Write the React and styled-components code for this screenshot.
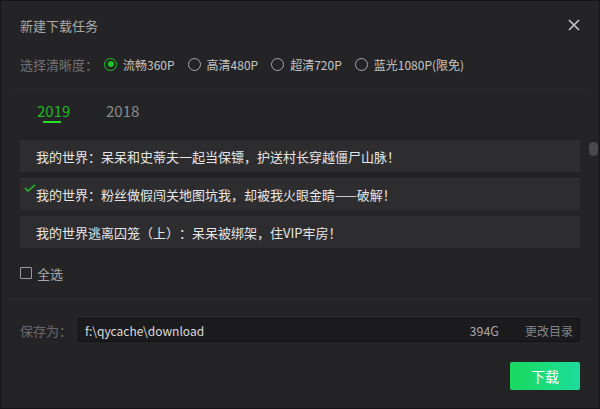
import React from 'react';
import styled, { createGlobalStyle } from 'styled-components';

const GlobalStyle = createGlobalStyle`
	html, body {
		margin: 0;
		padding: 0;
		background: #242426;
	}
	* {
		box-sizing: border-box;
	}
`;

const Dialog = styled.div`
	width: 600px;
	height: 409px;
	background: #242426;
	border: 1px solid #161618;
	font-family: "Noto Sans CJK SC", "Noto Sans", sans-serif;
	text-spacing-trim: space-all;
	display: flex;
	flex-direction: column;
`;

const Header = styled.div`
	height: 48px;
	display: flex;
	align-items: center;
	justify-content: space-between;
	padding: 0 18px 0 19px;
`;

const Title = styled.div`
	font-size: 13px;
	color: #a9a9a9;
`;

const CloseButton = styled.button`
	background: none;
	border: none;
	padding: 0;
	width: 14px;
	height: 14px;
	display: flex;
	align-items: center;
	justify-content: center;
	cursor: pointer;
`;

const QualityRow = styled.div`
	height: 30px;
	display: flex;
	align-items: center;
	padding-left: 19px;
`;

const QualityLabel = styled.span`
	font-size: 13px;
	color: #727274;
	margin-right: 6px;
`;

const RadioOption = styled.label`
	display: flex;
	align-items: center;
	gap: 6px;
	font-size: 12px;
	color: #c4c4c4;
	margin-right: 13px;
	cursor: pointer;
`;

const RadioCircle = styled.span`
	width: 13px;
	height: 13px;
	border-radius: 50%;
	border: 1.5px solid ${(p) => (p.$checked ? '#1fc41f' : '#a8a8a8')};
	display: flex;
	align-items: center;
	justify-content: center;

	&::after {
		content: '';
		display: ${(p) => (p.$checked ? 'block' : 'none')};
		width: 6px;
		height: 6px;
		border-radius: 50%;
		background: #1fc41f;
	}
`;

const Divider = styled.div`
	height: 1px;
	background: #2e2e30;
	margin: ${(p) => p.$top}px 11px 0;
`;

const Tabs = styled.div`
	display: flex;
	padding: 11px 0 0 36px;
`;

const Tab = styled.div`
	width: 69px;
	display: flex;
	flex-direction: column;
	align-items: flex-start;
	font-size: 15px;
	line-height: 20px;
	color: ${(p) => (p.$active ? '#22b522' : '#8a8a8a')};
	cursor: pointer;
`;

const TabBar = styled.div`
	width: 18px;
	height: 2px;
	margin-left: 6px;
	background: ${(p) => (p.$active ? '#27e027' : 'transparent')};
`;

const ListArea = styled.div`
	position: relative;
	margin-top: 17px;
	padding: 0 19px;
	display: flex;
	flex-direction: column;
	gap: 6px;
`;

const ListItem = styled.div`
	position: relative;
	height: 32px;
	display: flex;
	align-items: center;
	padding-left: 16px;
	background: #2d2d2f;
	font-size: 13px;
	color: #e6e6e6;
`;

const CheckMark = styled.svg`
	position: absolute;
	left: 4px;
	top: 6px;
`;

const ScrollThumb = styled.div`
	position: absolute;
	right: 1px;
	top: 2px;
	width: 9px;
	height: 14px;
	border-radius: 5px;
	background: #4a4a4c;
`;

const SelectAll = styled.label`
	height: 24px;
	margin-top: 13px;
	padding-left: 19px;
	display: flex;
	align-items: center;
	gap: 5px;
	font-size: 13px;
	color: #a9a9a9;
`;

const CheckBox = styled.span`
	width: 12px;
	height: 12px;
	border: 1.5px solid #9c9c9c;
	border-radius: 1px;
`;

const SaveRow = styled.div`
	margin-top: 18px;
	padding: 0 19px;
	display: flex;
	align-items: center;
`;

const SaveLabel = styled.span`
	width: 58px;
	font-size: 13px;
	color: #68686a;
`;

const PathBox = styled.div`
	flex: 1;
	height: 24px;
	display: flex;
	align-items: center;
	padding: 0 6px;
	background: #1b1b1d;
	border: 1px solid #121214;
	border-radius: 2px;
	font-size: 12px;
`;

const PathText = styled.span`
	flex: 1;
	color: #dcdcdc;
`;

const FreeSpace = styled.span`
	font-size: 12.5px;
	color: #a8a8a8;
	margin-right: 26px;
`;

const ChangeDir = styled.span`
	font-size: 12px;
	color: #858585;
`;

const Footer = styled.div`
	margin-top: 20px;
	padding: 0 19px;
	display: flex;
	justify-content: flex-end;
`;

const DownloadButton = styled.button`
	width: 70px;
	height: 28px;
	border: none;
	border-radius: 2px;
	background: linear-gradient(90deg, #19d95e, #1ddd9c);
	color: #ffffff;
	font-family: inherit;
	font-size: 14px;
	cursor: pointer;
`;

const qualities = [
	{ label: '流畅360P', checked: true },
	{ label: '高清480P' },
	{ label: '超清720P' },
	{ label: '蓝光1080P(限免)' },
];

const episodes = [
	{ title: '我的世界：呆呆和史蒂夫一起当保镖，护送村长穿越僵尸山脉！' },
	{ title: '我的世界：粉丝做假闯关地图坑我，却被我火眼金睛——破解！', checked: true },
	{ title: '我的世界逃离囚笼（上）：呆呆被绑架，住VIP牢房！' },
];

const App = () => {
	return (
		<>
			<GlobalStyle />
			<Dialog>
				<Header>
					<Title>新建下载任务</Title>
					<CloseButton>
						<svg width="12" height="12" viewBox="0 0 12 12">
							<path d="M1 1 L11 11 M11 1 L1 11" stroke="#c4c4c4" strokeWidth="1.7" />
						</svg>
					</CloseButton>
				</Header>
				<QualityRow>
					<QualityLabel>选择清晰度：</QualityLabel>
					{qualities.map((q) => (
						<RadioOption key={q.label}>
							<RadioCircle $checked={q.checked} />
							{q.label}
						</RadioOption>
					))}
				</QualityRow>
				<Divider $top={10} />
				<Tabs>
					<Tab $active>
						2019
						<TabBar $active />
					</Tab>
					<Tab>
						2018
						<TabBar />
					</Tab>
				</Tabs>
				<ListArea>
					{episodes.map((e) => (
						<ListItem key={e.title}>
							{e.checked && (
								<CheckMark width="12" height="8" viewBox="0 0 12 8">
									<path d="M1 4 L4 7 L11 1" fill="none" stroke="#22c322" strokeWidth="1.5" />
								</CheckMark>
							)}
							{e.title}
						</ListItem>
					))}
					<ScrollThumb />
				</ListArea>
				<SelectAll>
					<CheckBox />
					全选
				</SelectAll>
				<Divider $top={14} />
				<SaveRow>
					<SaveLabel>保存为：</SaveLabel>
					<PathBox>
						<PathText>f:\qycache\download</PathText>
						<FreeSpace>394G</FreeSpace>
						<ChangeDir>更改目录</ChangeDir>
					</PathBox>
				</SaveRow>
				<Footer>
					<DownloadButton>下载</DownloadButton>
				</Footer>
			</Dialog>
		</>
	);
};

export default App;
